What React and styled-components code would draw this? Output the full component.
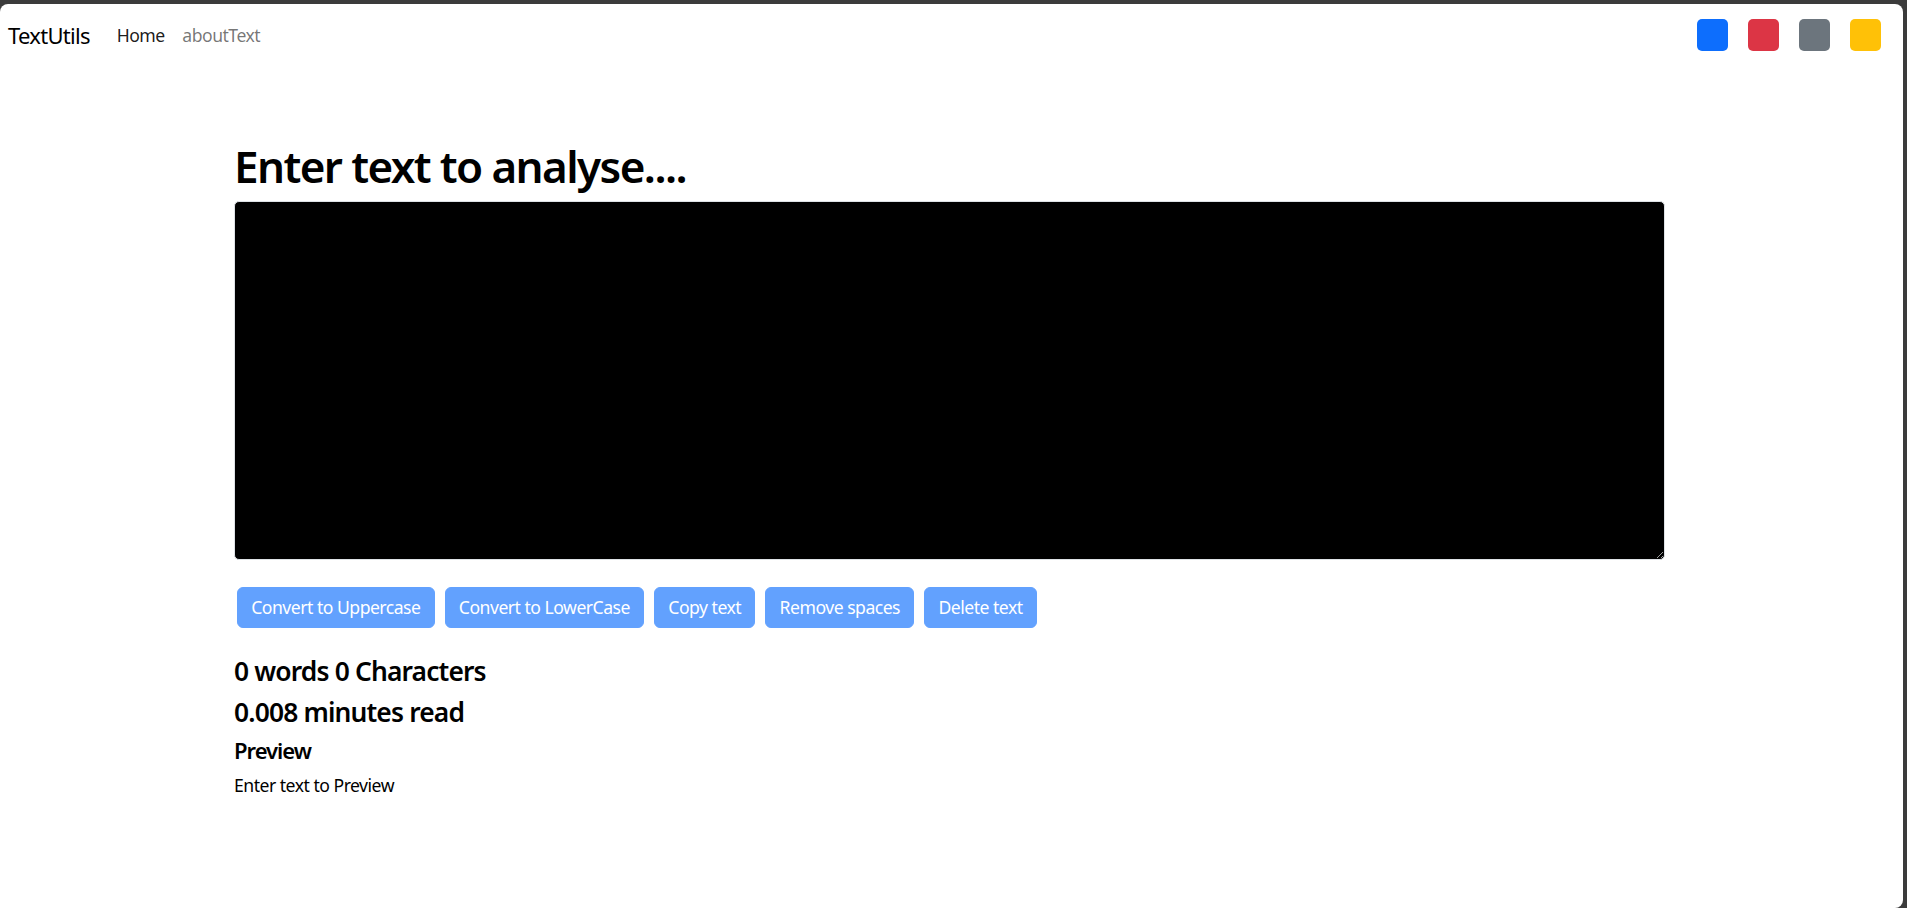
import React from 'react';
import styled, { createGlobalStyle } from 'styled-components';

const Global = createGlobalStyle`
  html, body {
    margin: 0;
    padding: 0;
    height: 100%;
    background: #3b3b3b;
  }
  body {
    font-family: "Noto Sans", "Open Sans", sans-serif;
    overflow: hidden;
  }
  #root { height: 100%; }
  * { box-sizing: border-box; }
`;

const Window = styled.div`
  margin-top: 4px;
  width: 1903px;
  height: 904px;
  background: #fff;
  border-radius: 8px 8px 8px 0;
  overflow: hidden;
  color: #000;
`;

const Navbar = styled.nav`
  display: flex;
  align-items: center;
  height: 62px;
  padding: 0 22px 0 8px;
`;

const Brand = styled.a`
  font-size: 22px;
  line-height: 1.5;
  letter-spacing: -0.7px;
  color: #000;
  text-decoration: none;
  margin-right: 18px;
`;

const NavList = styled.ul`
  display: flex;
  list-style: none;
  margin: 0;
  padding: 0;
`;

const NavLink = styled.a`
  display: block;
  padding: 0 8.8px;
  font-size: 17.6px;
  line-height: 1.5;
  letter-spacing: -0.5px;
  text-decoration: none;
  color: ${(p) => (p.$active ? 'rgba(0,0,0,0.9)' : 'rgba(0,0,0,0.55)')};
`;

const Swatches = styled.div`
  margin-left: auto;
  display: flex;
  gap: 20px;
`;

const Swatch = styled.div`
  width: 31px;
  height: 32px;
  border-radius: 5px;
  background: ${(p) => p.$color};
  cursor: pointer;
`;

const Container = styled.main`
  margin-left: 234px;
  width: 1431px;
`;

const Title = styled.h1`
  margin: 73.5px 0 8.8px;
  font-size: 44px;
  font-weight: 600;
  letter-spacing: -1.6px;
  line-height: 1.2;
`;

const TextBox = styled.textarea`
  display: block;
  width: 100%;
  height: 359px;
  margin: 0;
  background: #000;
  color: #fff;
  border: 1px solid #dee2e6;
  border-radius: 5px;
  padding: 6.6px 13.2px;
  font-family: inherit;
  font-size: 17.6px;
  outline: none;
`;

const ButtonRow = styled.div`
  display: flex;
  gap: 10px;
  margin: 27px 0 0 3px;
`;

const Button = styled.button`
  background: #62a1fe;
  border: 1px solid #62a1fe;
  color: #fff;
  border-radius: 6px;
  padding: 6.3px 13.2px;
  font-family: inherit;
  font-size: 17.6px;
  line-height: 1.5;
  letter-spacing: -0.5px;
`;

const Stat = styled.h4`
  margin: 0 0 8.8px;
  font-size: 26.4px;
  font-weight: 600;
  letter-spacing: -0.85px;
  line-height: 1.2;
  &:first-of-type { margin-top: 28px; }
`;

const SubTitle = styled.h5`
  margin: 0 0 8.8px;
  font-size: 22px;
  font-weight: 600;
  letter-spacing: -1px;
  line-height: 1.2;
`;

const PreviewText = styled.p`
  margin: 0;
  font-size: 17.6px;
  line-height: 1.5;
  letter-spacing: -0.5px;
`;

const swatchColors = ['#0d6efd', '#dc3545', '#6c757d', '#ffc107'];
const actions = ['Convert to Uppercase', 'Convert to LowerCase', 'Copy text', 'Remove spaces', 'Delete text'];

export default function App() {
  return (
    <>
      <Global />
      <Window>
        <Navbar>
          <Brand href="#">TextUtils</Brand>
          <NavList>
            <li><NavLink href="#" $active>Home</NavLink></li>
            <li><NavLink href="#">aboutText</NavLink></li>
          </NavList>
          <Swatches>
            {swatchColors.map((c) => (
              <Swatch key={c} $color={c} />
            ))}
          </Swatches>
        </Navbar>
        <Container>
          <Title>Enter text to analyse....</Title>
          <TextBox />
          <ButtonRow>
            {actions.map((a) => (
              <Button key={a} disabled>{a}</Button>
            ))}
          </ButtonRow>
          <Stat>0 words 0 Characters</Stat>
          <Stat>0.008 minutes read</Stat>
          <SubTitle>Preview</SubTitle>
          <PreviewText>Enter text to Preview</PreviewText>
        </Container>
      </Window>
    </>
  );
}
